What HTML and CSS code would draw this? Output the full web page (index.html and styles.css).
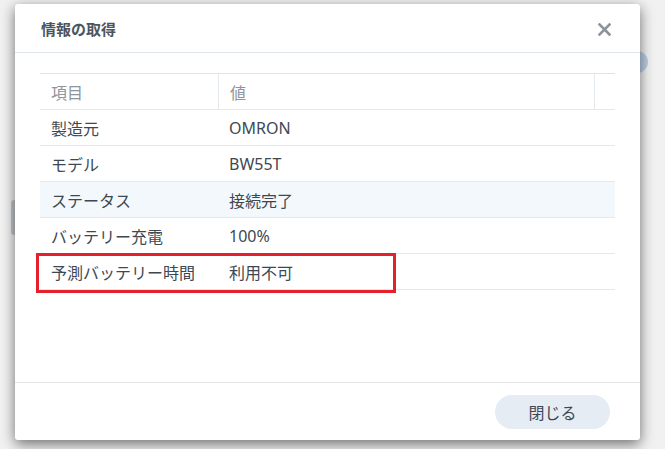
FILE: index.html
```html
<!DOCTYPE html>
<html lang="ja">

<head>
    <meta charset="UTF-8">
    <meta name="viewport"
          content="width=device-width, initial-scale=1.0">
    <title>情報の取得</title>
    <link rel="stylesheet" href="styles.css">
</head>

<body>
    <div class="backdrop-bar"></div>
    <div class="backdrop-badge">i</div>

    <div class="dialog">
        <div class="dialog-header">
            <span class="dialog-title">情報の取得</span>
            <svg class="close-icon" width="13" height="13" viewBox="0 0 13 13">
                <path d="M1.5 1.5 L11.5 11.5 M11.5 1.5 L1.5 11.5"
                      stroke="#8d939a" stroke-width="2.6" stroke-linecap="square" fill="none"/>
            </svg>
        </div>

        <div class="dialog-body">
            <div class="info-table">
                <div class="row head-row">
                    <div class="cell col-key">項目</div>
                    <div class="cell col-value">値</div>
                    <div class="cell col-extra"></div>
                </div>
                <div class="row">
                    <div class="cell col-key">製造元</div>
                    <div class="cell col-value">OMRON</div>
                </div>
                <div class="row">
                    <div class="cell col-key">モデル</div>
                    <div class="cell col-value">BW55T</div>
                </div>
                <div class="row row-hover">
                    <div class="cell col-key">ステータス</div>
                    <div class="cell col-value">接続完了</div>
                </div>
                <div class="row">
                    <div class="cell col-key">バッテリー充電</div>
                    <div class="cell col-value">100%</div>
                </div>
                <div class="row row-marked">
                    <div class="cell col-key">予測バッテリー時間</div>
                    <div class="cell col-value">利用不可</div>
                    <div class="mark-box"></div>
                </div>
            </div>
        </div>

        <div class="dialog-footer">
            <button class="btn-close">閉じる</button>
        </div>
    </div>
</body>

</html>
```

FILE: styles.css
```css
body {
    margin: 0;
    padding: 0;
    width: 665px;
    height: 449px;
    overflow: hidden;
    position: relative;
    background-color: #f1f1f1;
    font-family: "Noto Sans", "Noto Sans CJK JP", sans-serif;
    color: #3e4852;
}

.backdrop-bar {
    position: absolute;
    left: 11px;
    top: 200px;
    width: 6px;
    height: 35px;
    border-radius: 3px;
    background-color: #c4c7cb;
}

.backdrop-badge {
    position: absolute;
    left: 626px;
    top: 51px;
    width: 22px;
    height: 22px;
    border-radius: 50%;
    background-color: #b9cfe4;
    color: #2f6fb3;
    font-size: 12px;
    line-height: 22px;
    text-align: center;
}

.dialog {
    position: relative;
    margin: 4px 0 0 15px;
    width: 625px;
    height: 436px;
    display: flex;
    flex-direction: column;
    background-color: #fff;
    border-radius: 3px;
    box-shadow: 0 4px 14px rgba(0, 0, 0, 0.55);
}

.dialog-header {
    height: 48px;
    padding: 0 29px 0 26px;
    display: flex;
    align-items: center;
    justify-content: space-between;
    border-bottom: 1px solid #dfe5ec;
}

.dialog-title {
    font-family: "Noto Sans CJK JP", sans-serif;
    font-size: 15px;
    font-weight: bold;
    color: #4b5561;
}

.close-icon {
    margin-top: 2px;
}

.dialog-body {
    flex: 1;
    padding: 20px 25px 0 25px;
}

.info-table {
    border-top: 1px solid #dde4eb;
}

.row {
    position: relative;
    display: flex;
    height: 35px;
    border-bottom: 1px solid #e4e9ee;
    font-size: 16px;
}

.cell {
    display: flex;
    align-items: center;
    padding-left: 11px;
}

.col-key {
    width: 167px;
}

.col-value {
    flex: 1;
}

.head-row .cell {
    color: #8e959c;
}

.head-row .col-key,
.head-row .col-value {
    border-right: 1px solid #e4e9ee;
}

.head-row .col-extra {
    width: 20px;
    padding: 0;
}

.row-hover {
    background-color: #f3f8fc;
}

.mark-box {
    position: absolute;
    left: -4px;
    top: -1px;
    width: 354px;
    height: 34px;
    border: 3px solid #e3202b;
}

.dialog-footer {
    height: 58px;
    border-top: 1px solid #e4e7ea;
    display: flex;
    align-items: flex-start;
    justify-content: flex-end;
    padding: 12px 30px 0 0;
    box-sizing: border-box;
}

.btn-close {
    width: 115px;
    height: 34px;
    border: none;
    border-radius: 17px;
    background-color: #e6ecf3;
    color: #3e4852;
    font-family: "Noto Sans CJK JP", sans-serif;
    font-size: 16px;
    cursor: pointer;
}
```
